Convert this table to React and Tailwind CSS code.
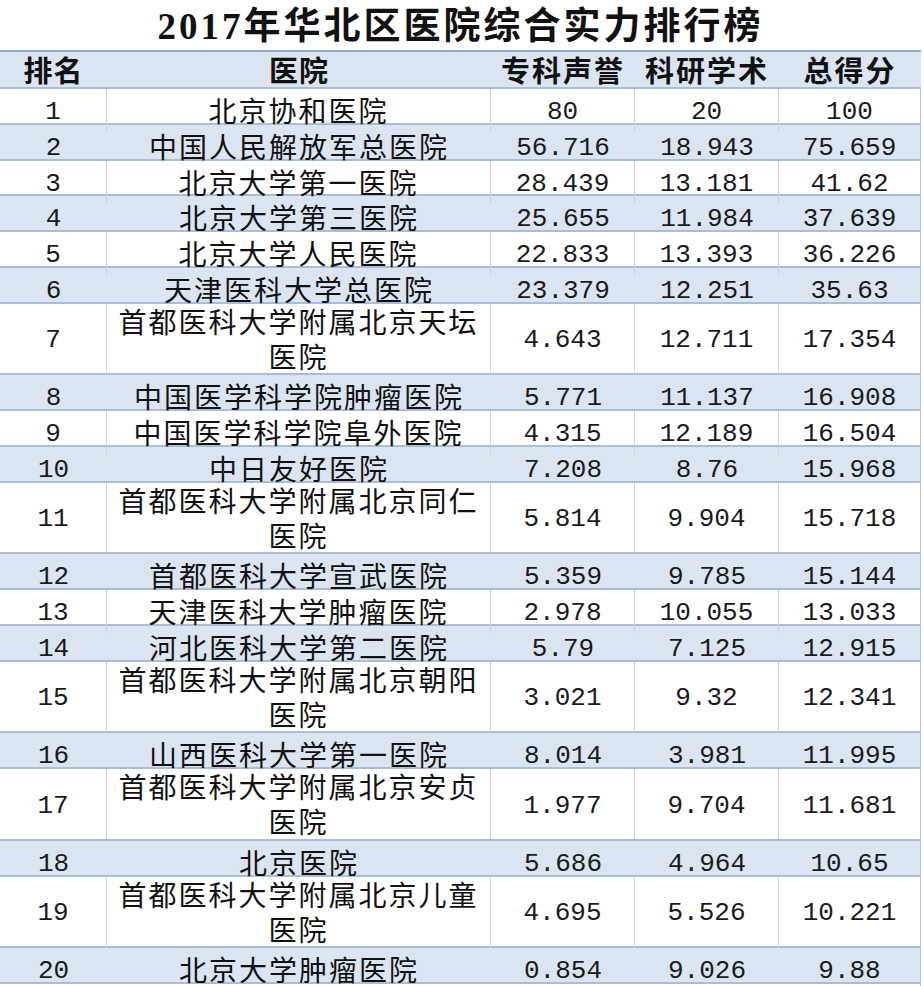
import React from "react";

const rows = [
  ["1", ["北京协和医院"], "80", "20", "100"],
  ["2", ["中国人民解放军总医院"], "56.716", "18.943", "75.659"],
  ["3", ["北京大学第一医院"], "28.439", "13.181", "41.62"],
  ["4", ["北京大学第三医院"], "25.655", "11.984", "37.639"],
  ["5", ["北京大学人民医院"], "22.833", "13.393", "36.226"],
  ["6", ["天津医科大学总医院"], "23.379", "12.251", "35.63"],
  ["7", ["首都医科大学附属北京天坛", "医院"], "4.643", "12.711", "17.354"],
  ["8", ["中国医学科学院肿瘤医院"], "5.771", "11.137", "16.908"],
  ["9", ["中国医学科学院阜外医院"], "4.315", "12.189", "16.504"],
  ["10", ["中日友好医院"], "7.208", "8.76", "15.968"],
  ["11", ["首都医科大学附属北京同仁", "医院"], "5.814", "9.904", "15.718"],
  ["12", ["首都医科大学宣武医院"], "5.359", "9.785", "15.144"],
  ["13", ["天津医科大学肿瘤医院"], "2.978", "10.055", "13.033"],
  ["14", ["河北医科大学第二医院"], "5.79", "7.125", "12.915"],
  ["15", ["首都医科大学附属北京朝阳", "医院"], "3.021", "9.32", "12.341"],
  ["16", ["山西医科大学第一医院"], "8.014", "3.981", "11.995"],
  ["17", ["首都医科大学附属北京安贞", "医院"], "1.977", "9.704", "11.681"],
  ["18", ["北京医院"], "5.686", "4.964", "10.65"],
  ["19", ["首都医科大学附属北京儿童", "医院"], "4.695", "5.526", "10.221"],
  ["20", ["北京大学肿瘤医院"], "0.854", "9.026", "9.88"],
];

const cjk = { fontFamily: '"Noto Sans CJK SC", "Noto Sans", sans-serif' };
const mono = { fontFamily: '"Liberation Mono", "DejaVu Sans Mono", monospace' };

function Row({ r, i }) {
  const blue = i % 2 === 1;
  const double = r[1].length > 1;
  const vline = blue ? "" : "border-r border-[#cfd3d8]";
  return (
    <div
      className={`grid grid-cols-[107px_384px_144px_144px_142px] border-b-2 border-[#a9bdd8] text-[#111] ${
        blue ? "bg-[#dbe5f1]" : "bg-white"
      } ${double ? "h-[71.6px]" : "h-[35.8px]"}`}
    >
      <div className={`flex items-center justify-center pt-[4px] text-[26px] text-[#1a1a1a] ${vline}`} style={mono}>
        {r[0]}
      </div>
      <div
        className={`flex flex-col items-center justify-center text-[28px] leading-[35px] tracking-[2px] ${vline}`}
        style={cjk}
      >
        {r[1].map((t, k) => (
          <span key={k}>{t}</span>
        ))}
      </div>
      <div className={`flex items-center justify-center pt-[4px] text-[26px] text-[#1a1a1a] ${vline}`} style={mono}>
        {r[2]}
      </div>
      <div className={`flex items-center justify-center pt-[4px] text-[26px] text-[#1a1a1a] ${vline}`} style={mono}>
        {r[3]}
      </div>
      <div
        className="flex items-center justify-center pt-[4px] text-[26px] text-[#1a1a1a] border-r border-[#b9c7d9]"
        style={mono}
      >
        {r[4]}
      </div>
    </div>
  );
}

export default function App() {
  return (
    <div className="w-[924px] h-[986px] bg-white overflow-hidden">
      <div className="w-[921px]">
        <div
          className="h-[52px] flex items-center justify-center pt-[4px] border-b-2 border-[#8eaad0] text-[37px] font-bold tracking-[3px] text-[#111]"
          style={{ fontFamily: '"Liberation Serif", "Noto Sans CJK SC", serif' }}
        >
          2017年华北区医院综合实力排行榜
        </div>
        <div
          className="h-[37px] grid grid-cols-[107px_384px_144px_144px_142px] bg-[#dbe5f1] border-b-2 border-[#a9bdd8] text-[29px] font-bold text-[#111] leading-none"
          style={cjk}
        >
          <div className="flex items-center justify-center tracking-[1px]">排名</div>
          <div className="flex items-center justify-center tracking-[1px]">医院</div>
          <div className="flex items-center justify-center tracking-[2px]">专科声誉</div>
          <div className="flex items-center justify-center tracking-[2px]">科研学术</div>
          <div className="flex items-center justify-center tracking-[2px]">总得分</div>
        </div>
        {rows.map((r, i) => (
          <Row key={i} r={r} i={i} />
        ))}
      </div>
    </div>
  );
}
